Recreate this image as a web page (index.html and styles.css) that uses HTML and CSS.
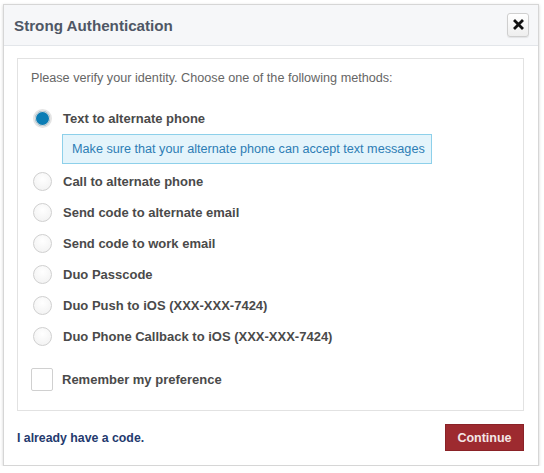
FILE: index.html
```html
<!DOCTYPE html>
<html>
<head>
<meta charset="utf-8">
<link rel="stylesheet" href="styles.css">
</head>
<body>
<div class="dialog">
  <div class="header">
    <h1 class="title">Strong Authentication</h1>
    <button class="close" aria-label="Close">
      <svg width="11" height="11" viewBox="0 0 11 11"><path d="M2 2 L9 9 M9 2 L2 9" stroke="#111" stroke-width="2.8" stroke-linecap="square"/></svg>
    </button>
  </div>
  <div class="body">
    <div class="panel">
      <p class="intro">Please verify your identity. Choose one of the following methods:</p>
      <div class="option"><span class="radio checked"></span><span class="label">Text to alternate phone</span></div>
      <div class="info">Make sure that your alternate phone can accept text messages</div>
      <div class="option"><span class="radio"></span><span class="label">Call to alternate phone</span></div>
      <div class="option"><span class="radio"></span><span class="label">Send code to alternate email</span></div>
      <div class="option"><span class="radio"></span><span class="label">Send code to work email</span></div>
      <div class="option"><span class="radio"></span><span class="label">Duo Passcode</span></div>
      <div class="option"><span class="radio"></span><span class="label">Duo Push to iOS (XXX-XXX-7424)</span></div>
      <div class="option"><span class="radio"></span><span class="label">Duo Phone Callback to iOS (XXX-XXX-7424)</span></div>
      <div class="option remember"><span class="checkbox"></span><span class="label">Remember my preference</span></div>
    </div>
  </div>
  <div class="footer">
    <a class="link" href="#">I already have a code.</a>
    <button class="continue">Continue</button>
  </div>
</div>
</body>
</html>
```

FILE: styles.css
```css
html, body {
  margin: 0;
  padding: 0;
  background: #ffffff;
}
body {
  font-family: "Liberation Sans", Arial, sans-serif;
  font-size: 12px;
  color: #4a4a4a;
}
.dialog {
  margin: 4px 0 0 3px;
  width: 534px;
  height: 460px;
  border: 1px solid #d6d6d6;
  box-shadow: 0 1px 3px rgba(0,0,0,0.18);
  background: #fff;
  display: flex;
  flex-direction: column;
}
.header {
  height: 40px;
  background: #f6f7f9;
  border-bottom: 1px solid #e3e6ea;
  display: flex;
  align-items: center;
  justify-content: space-between;
  padding: 0 9px 0 10px;
}
.title {
  margin: 0;
  font-size: 15.2px;
  font-weight: bold;
  color: #4f5766;
}
.close {
  width: 22px;
  height: 24px;
  margin-top: -1px;
  padding: 0;
  border: 1px solid #cfcfcf;
  border-radius: 3px;
  background: linear-gradient(#ffffff, #eeeeee);
  box-shadow: 0 1px 1px rgba(0,0,0,0.08);
  display: flex;
  align-items: center;
  justify-content: center;
}
.body {
  padding: 12px 14px 0 13px;
}
.panel {
  box-sizing: border-box;
  border: 1px solid #e2e2e2;
  height: 353px;
  padding: 12px 14px 0 13px;
}
.intro {
  margin: 0 0 18px 0;
  color: #666;
  font-size: 12.65px;
  line-height: 14px;
}
.option {
  display: flex;
  align-items: center;
  height: 31px;
}
.radio {
  box-sizing: border-box;
  width: 19px;
  height: 19px;
  border-radius: 50%;
  border: 1px solid #d0d0d0;
  background: radial-gradient(circle at 50% 35%, #ffffff, #f0f0f0);
  margin-left: 2px;
  margin-right: 11px;
  flex: none;
}
.radio.checked {
  background: #0b7db5;
  border: 2px solid #e4e4e4;
  box-shadow: 0 0 0 1px #d8d8d8 inset;
}
.label {
  font-weight: bold;
  font-size: 13px;
  color: #4a4a4a;
}
.info {
  margin: 0 0 2px 31px;
  width: 359px;
  height: 28px;
  line-height: 28px;
  padding-left: 9px;
  box-sizing: content-box;
  background: #e4f4fb;
  border: 1px solid #8dd0ea;
  color: #2d7db5;
  font-size: 12.65px;
  white-space: nowrap;
}
.remember {
  margin-top: 12px;
}
.checkbox {
  box-sizing: border-box;
  width: 22px;
  height: 23px;
  border: 1px solid #d0d0d0;
  border-radius: 2px;
  background: #fff;
  margin-right: 9px;
  flex: none;
}
.footer {
  display: flex;
  align-items: center;
  justify-content: space-between;
  padding: 13px 14px 0 13px;
}
.link {
  color: #243a6e;
  font-weight: bold;
  text-decoration: none;
  font-size: 12.3px;
}
.continue {
  width: 79px;
  height: 27px;
  background: #9d2a2f;
  color: #f4e6e6;
  border: 1px solid #8a2227;
  font-family: "Liberation Sans", Arial, sans-serif;
  font-weight: bold;
  font-size: 12.5px;
  padding: 0;
}
```
